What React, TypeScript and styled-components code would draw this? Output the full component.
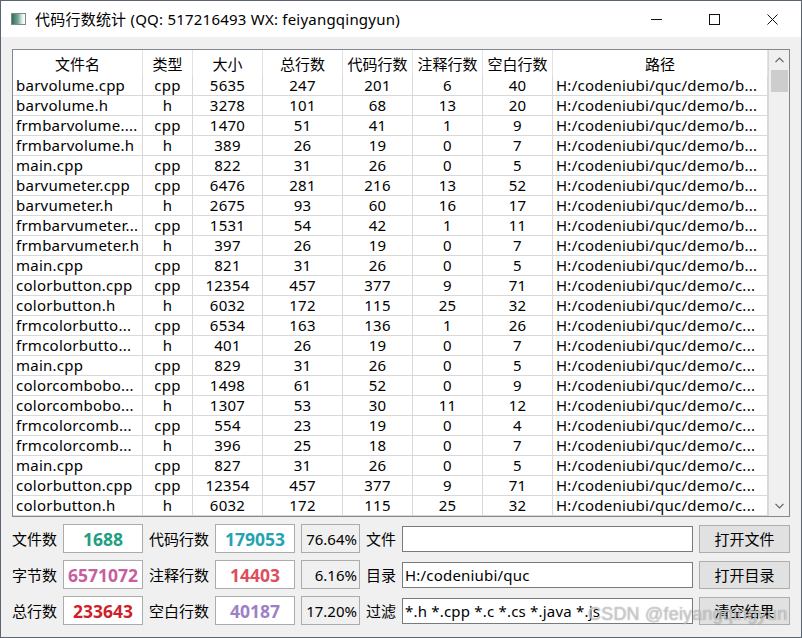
import React from "react";
import styled, { createGlobalStyle } from "styled-components";

const FONT = `"Noto Sans", "Noto Sans CJK SC", sans-serif`;

const GlobalStyle = createGlobalStyle`
  html, body {
    margin: 0;
    padding: 0;
    background: #ffffff;
  }
  * {
    box-sizing: border-box;
  }
`;

const Window = styled.div`
  position: relative;
  width: 802px;
  height: 638px;
  border: 1px solid #5b6572;
  display: flex;
  flex-direction: column;
  font-family: ${FONT};
  font-size: 15px;
  color: #000;
  overflow: hidden;
`;

const TitleBar = styled.div`
  height: 36px;
  background: #ffffff;
  display: flex;
  align-items: center;
  flex-shrink: 0;
`;

const AppIcon = styled.div`
  width: 15px;
  height: 12px;
  margin: 0 9px 0 10px;
  border: 1px solid #7d8a86;
  background: linear-gradient(90deg, #2f6f5c 0%, #6fa894 45%, #e9efed 80%, #ffffff 100%);
`;

const Title = styled.div`
  flex: 1;
  font-size: 15px;
  line-height: 20px;
  letter-spacing: 0.22px;
  white-space: nowrap;
`;

const CaptionButton = styled.div`
  width: 58px;
  height: 36px;
  display: flex;
  align-items: center;
  justify-content: center;
  color: #111;
`;

const Body = styled.div`
  flex: 1;
  background: #f0f0f0;
  padding: 12px 11px 0 11px;
  display: flex;
  flex-direction: column;
`;

const TableFrame = styled.div`
  height: 468px;
  border: 1px solid #828790;
  background: #ffffff;
  display: flex;
`;

const Grid = styled.div`
  width: 755px;
  display: grid;
  grid-template-columns: 130px 50px 70px 80px 70px 70px 70px 215px;
  grid-auto-rows: 20px;
  grid-template-rows: 26px;
  align-content: start;
`;

const HeadCell = styled.div`
  display: flex;
  align-items: center;
  justify-content: center;
  border-right: 1px solid #e3e3e3;
  line-height: 20px;
  white-space: nowrap;
  overflow: hidden;
  padding-top: 2px;
`;

const Cell = styled.div<{ $left?: boolean }>`
  display: flex;
  align-items: center;
  justify-content: ${(p) => (p.$left ? "flex-start" : "center")};
  padding-left: ${(p) => (p.$left ? "3px" : "0")};
  border-right: 1px solid #d8d8d8;
  border-bottom: 1px solid #d8d8d8;
  line-height: 19px;
  letter-spacing: 0.25px;
  white-space: nowrap;
  overflow: hidden;
`;

const ScrollBar = styled.div`
  width: 21px;
  background: #f0f0f0;
  border-left: 1px solid #d8d8d8;
  display: flex;
  flex-direction: column;
  align-items: center;
`;

const ScrollArrow = styled.div`
  height: 20px;
  width: 100%;
  display: flex;
  align-items: center;
  justify-content: center;
`;

const ScrollThumb = styled.div`
  width: 17px;
  height: 22px;
  background: #cdcdcd;
`;

const ScrollTrack = styled.div`
  flex: 1;
`;

const Panel = styled.div`
  display: grid;
  grid-template-columns: 45px 80px 60px 80px 59px 30px 1fr 91px;
  grid-auto-rows: 29px;
  column-gap: 6px;
  row-gap: 7px;
  padding-top: 7px;
  align-items: center;
`;

const Label = styled.div`
  white-space: nowrap;
  line-height: 20px;
`;

const StatBox = styled.div<{ $color: string }>`
  height: 29px;
  background: #ffffff;
  border: 1px solid #acacac;
  display: flex;
  align-items: center;
  justify-content: center;
  font-weight: bold;
  font-size: 17.5px;
  color: ${(p) => p.$color};
`;

const PercentBox = styled.div`
  height: 29px;
  background: #f0f0f0;
  border: 1px solid #acacac;
  display: flex;
  align-items: center;
  justify-content: flex-end;
  padding-right: 2px;
  white-space: nowrap;
`;

const TextInput = styled.div`
  height: 26px;
  background: #ffffff;
  border: 1px solid #7a7a7a;
  display: flex;
  align-items: center;
  padding-left: 2px;
  letter-spacing: 0.2px;
  white-space: nowrap;
  overflow: hidden;
`;

const PushButton = styled.div`
  height: 28px;
  background: #e1e1e1;
  border: 1px solid #adadad;
  display: flex;
  align-items: center;
  justify-content: center;
`;

const Watermark = styled.div`
  position: absolute;
  left: 587px;
  top: 603px;
  font-family: "Liberation Sans", sans-serif;
  font-size: 18px;
  color: rgba(255, 255, 255, 0.55);
  text-shadow: 0 0 1px rgba(70, 70, 70, 0.7);
  letter-spacing: 0.2px;
  pointer-events: none;
`;

const headers = ["文件名", "类型", "大小", "总行数", "代码行数", "注释行数", "空白行数", "路径"];

const rows: [string, string, number, number, number, number, number, string][] = [
  ["barvolume.cpp", "cpp", 5635, 247, 201, 6, 40, "b"],
  ["barvolume.h", "h", 3278, 101, 68, 13, 20, "b"],
  ["frmbarvolume....", "cpp", 1470, 51, 41, 1, 9, "b"],
  ["frmbarvolume.h", "h", 389, 26, 19, 0, 7, "b"],
  ["main.cpp", "cpp", 822, 31, 26, 0, 5, "b"],
  ["barvumeter.cpp", "cpp", 6476, 281, 216, 13, 52, "b"],
  ["barvumeter.h", "h", 2675, 93, 60, 16, 17, "b"],
  ["frmbarvumeter...", "cpp", 1531, 54, 42, 1, 11, "b"],
  ["frmbarvumeter.h", "h", 397, 26, 19, 0, 7, "b"],
  ["main.cpp", "cpp", 821, 31, 26, 0, 5, "b"],
  ["colorbutton.cpp", "cpp", 12354, 457, 377, 9, 71, "c"],
  ["colorbutton.h", "h", 6032, 172, 115, 25, 32, "c"],
  ["frmcolorbutto...", "cpp", 6534, 163, 136, 1, 26, "c"],
  ["frmcolorbutto...", "h", 401, 26, 19, 0, 7, "c"],
  ["main.cpp", "cpp", 829, 31, 26, 0, 5, "c"],
  ["colorcombobo...", "cpp", 1498, 61, 52, 0, 9, "c"],
  ["colorcombobo...", "h", 1307, 53, 30, 11, 12, "c"],
  ["frmcolorcomb...", "cpp", 554, 23, 19, 0, 4, "c"],
  ["frmcolorcomb...", "h", 396, 25, 18, 0, 7, "c"],
  ["main.cpp", "cpp", 827, 31, 26, 0, 5, "c"],
  ["colorbutton.cpp", "cpp", 12354, 457, 377, 9, 71, "c"],
  ["colorbutton.h", "h", 6032, 172, 115, 25, 32, "c"],
];

const stats = [
  {
    label: "文件数", value: "1688", color: "#21a07f",
    label2: "代码行数", value2: "179053", color2: "#25a3b4", pct: "76.64%",
    label3: "文件", input: "", button: "打开文件",
  },
  {
    label: "字节数", value: "6571072", color: "#c75e9e",
    label2: "注释行数", value2: "14403", color2: "#de4d5c", pct: "6.16%",
    label3: "目录", input: "H:/codeniubi/quc", button: "打开目录",
  },
  {
    label: "总行数", value: "233643", color: "#cf1f2a",
    label2: "空白行数", value2: "40187", color2: "#9d80c6", pct: "17.20%",
    label3: "过滤", input: "*.h *.cpp *.c *.cs *.java *.js", button: "清空结果",
  },
];

function Chevron({ down }: { down?: boolean }) {
  return (
    <svg width="9" height="6" viewBox="0 0 9 6">
      <path
        d={down ? "M0.5 0.8 L4.5 4.8 L8.5 0.8" : "M0.5 5.2 L4.5 1.2 L8.5 5.2"}
        fill="none"
        stroke="#606060"
        strokeWidth="1.2"
      />
    </svg>
  );
}

export default function App() {
  return (
    <>
      <GlobalStyle />
      <Window>
        <TitleBar>
          <AppIcon />
          <Title>代码行数统计 (QQ: 517216493 WX: feiyangqingyun)</Title>
          <CaptionButton>
            <svg width="11" height="11" viewBox="0 0 11 11">
              <path d="M0 5.5 H11" stroke="#111" strokeWidth="1" />
            </svg>
          </CaptionButton>
          <CaptionButton>
            <svg width="11" height="11" viewBox="0 0 11 11">
              <rect x="0.5" y="0.5" width="10" height="10" fill="none" stroke="#111" strokeWidth="1" />
            </svg>
          </CaptionButton>
          <CaptionButton>
            <svg width="11" height="11" viewBox="0 0 11 11">
              <path d="M0.5 0.5 L10.5 10.5 M10.5 0.5 L0.5 10.5" stroke="#111" strokeWidth="1" />
            </svg>
          </CaptionButton>
        </TitleBar>
        <Body>
          <TableFrame>
            <Grid>
              {headers.map((h) => (
                <HeadCell key={h}>{h}</HeadCell>
              ))}
              {rows.map((r, i) => (
                <React.Fragment key={i}>
                  <Cell $left>{r[0]}</Cell>
                  <Cell>{r[1]}</Cell>
                  <Cell>{r[2]}</Cell>
                  <Cell>{r[3]}</Cell>
                  <Cell>{r[4]}</Cell>
                  <Cell>{r[5]}</Cell>
                  <Cell>{r[6]}</Cell>
                  <Cell $left>H:/codeniubi/quc/demo/{r[7]}...</Cell>
                </React.Fragment>
              ))}
            </Grid>
            <ScrollBar>
              <ScrollArrow>
                <Chevron />
              </ScrollArrow>
              <ScrollThumb />
              <ScrollTrack />
              <ScrollArrow>
                <Chevron down />
              </ScrollArrow>
            </ScrollBar>
          </TableFrame>
          <Panel>
            {stats.map((s) => (
              <React.Fragment key={s.label}>
                <Label>{s.label}</Label>
                <StatBox $color={s.color}>{s.value}</StatBox>
                <Label>{s.label2}</Label>
                <StatBox $color={s.color2}>{s.value2}</StatBox>
                <PercentBox>{s.pct}</PercentBox>
                <Label>{s.label3}</Label>
                <TextInput>{s.input}</TextInput>
                <PushButton>{s.button}</PushButton>
              </React.Fragment>
            ))}
          </Panel>
        </Body>
        <Watermark>CSDN @feiyangqingyun</Watermark>
      </Window>
    </>
  );
}
